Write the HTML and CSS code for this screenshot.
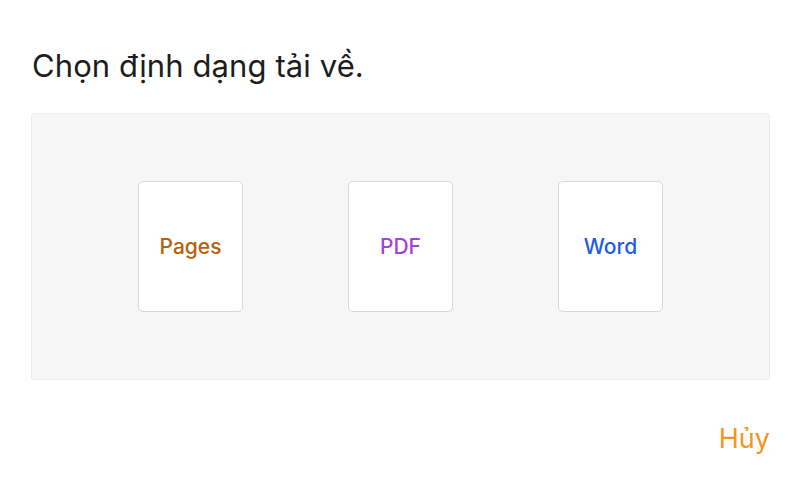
FILE: index.html
```html
<!DOCTYPE html>
<html lang="vi">
<head>
<meta charset="utf-8">
<link rel="stylesheet" href="styles.css">
</head>
<body>
<div class="dialog">
  <h1 class="title">Chọn định dạng tải về.</h1>
  <div class="panel">
    <div class="card"><span class="label pages">Pages</span></div>
    <div class="card"><span class="label pdf">PDF</span></div>
    <div class="card"><span class="label word">Word</span></div>
  </div>
  <div class="actions"><span class="cancel">Hủy</span></div>
</div>
</body>
</html>
```
FILE: styles.css
```css
html, body {
  margin: 0;
  padding: 0;
  background: #ffffff;
}
body {
  font-family: Inter, "Open Sans", "Noto Sans", sans-serif;
  color: #1c1c1c;
}
.dialog {
  width: 800px;
  height: 490px;
  padding: 44px 30px 0 31px;
  box-sizing: border-box;
}
.title {
  margin: 0 0 0 1px;
  font-size: 31px;
  font-weight: 400;
  line-height: 44px;
  letter-spacing: 0.1px;
  color: #1d1d1d;
}
.panel {
  margin-top: 25px;
  height: 267px;
  box-sizing: border-box;
  background: #f6f6f6;
  border: 1px solid #ececec;
  border-radius: 3px;
  display: flex;
  justify-content: center;
  align-items: center;
  gap: 105px;
}
.card {
  width: 105px;
  height: 131px;
  box-sizing: border-box;
  background: #ffffff;
  border: 1px solid #d8d8d8;
  border-radius: 5px;
  display: flex;
  align-items: center;
  justify-content: center;
}
.label {
  font-size: 21px;
  font-weight: 500;
  line-height: 26px;
}
.pages { color: #b5620c; }
.pdf { color: #a63fe0; }
.word { color: #1e5ae8; }
.actions {
  display: flex;
  justify-content: flex-end;
  margin-top: 42px;
}
.cancel {
  font-size: 27px;
  color: #f7941d;
  line-height: 34px;
}
```
